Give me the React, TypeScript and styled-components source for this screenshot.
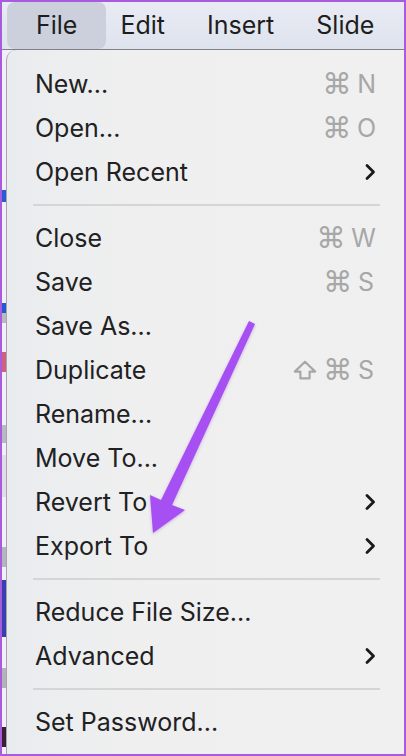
import styled, { createGlobalStyle } from "styled-components";

const GlobalStyle = createGlobalStyle`
  html, body {
    margin: 0;
    padding: 0;
    background: #ffffff;
  }
  * {
    box-sizing: border-box;
  }
`;

type Entry =
  | { kind: "item"; label: string; keys?: string[]; shift?: boolean; submenu?: boolean }
  | { kind: "sep" };

const entries: Entry[] = [
  { kind: "item", label: "New...", keys: ["⌘", "N"] },
  { kind: "item", label: "Open...", keys: ["⌘", "O"] },
  { kind: "item", label: "Open Recent", submenu: true },
  { kind: "sep" },
  { kind: "item", label: "Close", keys: ["⌘", "W"] },
  { kind: "item", label: "Save", keys: ["⌘", "S"] },
  { kind: "item", label: "Save As..." },
  { kind: "item", label: "Duplicate", keys: ["⌘", "S"], shift: true },
  { kind: "item", label: "Rename..." },
  { kind: "item", label: "Move To..." },
  { kind: "item", label: "Revert To", submenu: true },
  { kind: "item", label: "Export To", submenu: true },
  { kind: "sep" },
  { kind: "item", label: "Reduce File Size..." },
  { kind: "item", label: "Advanced", submenu: true },
  { kind: "sep" },
  { kind: "item", label: "Set Password..." },
];

// slivers of the window behind the menu, top to bottom
const strip = [
  { h: 140, c: "#f4eefa" },
  { h: 12, c: "#2a5bd7" },
  { h: 101, c: "#f4eefa" },
  { h: 10, c: "#2456d6" },
  { h: 10, c: "#b9b9c2" },
  { h: 29, c: "#f4eefa" },
  { h: 20, c: "#d0607f" },
  { h: 53, c: "#f4eefa" },
  { h: 18, c: "#b8b8c8" },
  { h: 12, c: "#f4eefa" },
  { h: 42, c: "#e2dcea" },
  { h: 50, c: "#f4eefa" },
  { h: 20, c: "#b5b5bd" },
  { h: 13, c: "#f4eefa" },
  { h: 57, c: "#3a3fb0" },
  { h: 31, c: "#f4eefa" },
  { h: 20, c: "#b3b3b8" },
  { h: 39, c: "#f4eefa" },
  { h: 20, c: "#3a2030" },
  { h: 7, c: "#f4eefa" },
];

const Chevron = () => (
  <svg width="12" height="18" viewBox="0 0 12 18">
    <polyline
      points="3,2.5 9.5,9 3,15.5"
      fill="none"
      stroke="#1a1a1a"
      strokeWidth="2.8"
      strokeLinecap="round"
      strokeLinejoin="round"
    />
  </svg>
);

const ShiftIcon = () => (
  <svg width="24" height="20" viewBox="0 0 24 20">
    <path
      d="M12 1.8 L22.2 11.6 H16.6 V18.4 H7.4 V11.6 H1.8 Z"
      fill="none"
      stroke="#a7a7a7"
      strokeWidth="2.2"
      strokeLinejoin="round"
    />
  </svg>
);

const App = () => {
  return (
    <>
      <GlobalStyle />
      <Frame>
        <MenuBar>
          <MenuTitle $active>File</MenuTitle>
          <MenuTitle>Edit</MenuTitle>
          <MenuTitle>Insert</MenuTitle>
          <MenuTitle>Slide</MenuTitle>
        </MenuBar>

        <Body>
          <BehindStrip>
            {strip.map((s, i) => (
              <Sliver key={i} style={{ height: s.h, background: s.c }} />
            ))}
          </BehindStrip>

          <Menu>
            {entries.map((e, i) =>
              e.kind === "sep" ? (
                <Separator key={i} />
              ) : (
                <Row key={i}>
                  <Label>{e.label}</Label>
                  {e.keys && (
                    <Keys>
                      {e.shift && <ShiftIcon />}
                      {e.keys.map((k, j) => (
                        <Key key={j} $letter={j === e.keys!.length - 1}>
                          {k}
                        </Key>
                      ))}
                    </Keys>
                  )}
                  {e.submenu && <Chevron />}
                </Row>
              )
            )}
          </Menu>
        </Body>

        <Arrow width="406" height="756" viewBox="0 0 406 756">
          <defs>
            <filter id="soft" x="-20%" y="-20%" width="140%" height="140%">
              <feDropShadow dx="0" dy="1" stdDeviation="1.5" floodColor="#7a2fc0" floodOpacity="0.35" />
            </filter>
          </defs>
          <polygon
            points="249,321 255,324 172,505 185,510 153,533 150,495 161,500"
            fill="#a64ff2"
            filter="url(#soft)"
          />
        </Arrow>
      </Frame>
    </>
  );
};

const Frame = styled.div`
  position: relative;
  width: 406px;
  height: 756px;
  border: 2px solid #a85bdc;
  overflow: hidden;
  font-family: "Inter", "DejaVu Sans", sans-serif;
  background: #f4eefa;
`;

const MenuBar = styled.div`
  display: flex;
  align-items: stretch;
  height: 48px;
  padding: 0 0 0 5px;
  background: linear-gradient(#e8ebf4, #dfe3ed);
  border-bottom: 1px solid #7f8188;
`;

const MenuTitle = styled.div<{ $active?: boolean }>`
  display: flex;
  align-items: center;
  padding: ${({ $active }) => ($active ? "0 29px 2px" : "0 21px 2px")};
  margin-right: ${({ $active }) => ($active ? "-7px" : "0")};
  border-radius: 8px;
  background: ${({ $active }) => ($active ? "#cbd0dc" : "transparent")};
  font-size: 25px;
  color: #1e1e20;
`;

const Body = styled.div`
  display: flex;
  height: 704px;
`;

const BehindStrip = styled.div`
  display: flex;
  flex-direction: column;
  width: 4px;
  flex-shrink: 0;
`;

const Sliver = styled.div`
  width: 100%;
`;

const Menu = styled.div`
  flex: 1;
  display: flex;
  flex-direction: column;
  padding: 12px 0 10px;
  background: linear-gradient(90deg, #e9ecef, #efefef 30%, #f0f0f0);
  border-left: 1px solid #a4a6aa;
  border-top-left-radius: 10px;
`;

const Row = styled.div`
  display: flex;
  align-items: center;
  justify-content: space-between;
  height: 44px;
  padding: 0 28px 0 28px;
`;

const Label = styled.span`
  font-size: 25px;
  color: #212123;
`;

const Keys = styled.span`
  display: flex;
  align-items: center;
  gap: 6px;
  color: #a7a7a7;
`;

const Key = styled.span<{ $letter?: boolean }>`
  font-family: ${({ $letter }) =>
    $letter ? '"Inter", sans-serif' : '"DejaVu Sans", sans-serif'};
  font-size: ${({ $letter }) => ($letter ? "25px" : "29px")};
  line-height: 1;
  min-width: ${({ $letter }) => ($letter ? "18px" : "0")};
`;

const Separator = styled.div`
  height: 2px;
  margin: 10px 24px 10px 26px;
  background: #d5d5d5;
`;

const Arrow = styled.svg`
  position: absolute;
  left: -2px;
  top: -2px;
  pointer-events: none;
`;

export default App;
